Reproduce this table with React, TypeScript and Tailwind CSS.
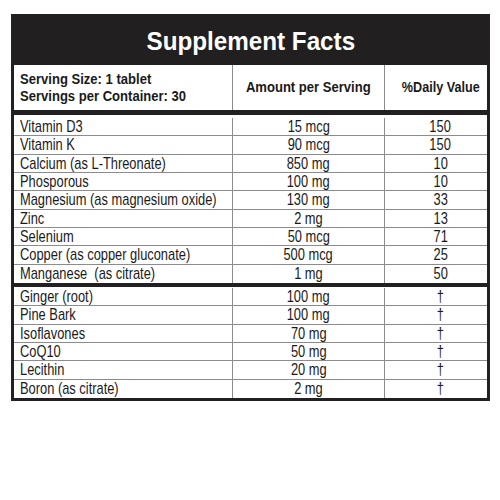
const vitamins = [
  ['Vitamin D3', '15 mcg', '150'],
  ['Vitamin K', '90 mcg', '150'],
  ['Calcium (as L-Threonate)', '850 mg', '10'],
  ['Phosporous', '100 mg', '10'],
  ['Magnesium (as magnesium oxide)', '130 mg', '33'],
  ['Zinc', '2 mg', '13'],
  ['Selenium', '50 mcg', '71'],
  ['Copper (as copper gluconate)', '500 mcg', '25'],
  ['Manganese\u00a0 (as citrate)', '1 mg', '50'],
];

const extras = [
  ['Ginger (root)', '100 mg', '†'],
  ['Pine Bark', '100 mg', '†'],
  ['Isoflavones', '70 mg', '†'],
  ['CoQ10', '50 mg', '†'],
  ['Lecithin', '20 mg', '†'],
  ['Boron (as citrate)', '2 mg', '†'],
];

function Row({ cells, last }: { cells: string[]; last: boolean }) {
  return (
    <div className={`flex h-[18.33px] text-[15.7px] leading-[17px] whitespace-nowrap ${last ? '' : 'border-b border-[#8c8c8c]'}`}>
      <div className="w-[219px] shrink-0 border-r border-[#8c8c8c] pl-[6px]">
        <span className="inline-block origin-left scale-x-[0.82]">{cells[0]}</span>
      </div>
      <div className="w-[152px] shrink-0 border-r border-[#8c8c8c] text-center">
        <span className="inline-block scale-x-[0.82]">{cells[1]}</span>
      </div>
      <div className="flex-1 pl-[9px] text-center">
        <span className="inline-block scale-x-[0.82]">{cells[2]}</span>
      </div>
    </div>
  );
}

export default function App() {
  return (
    <div className="w-[500px] h-[500px] bg-white pt-[14px] pl-[11px] text-[#1a1a1a] font-['Liberation_Sans',Arial,sans-serif]">
      <div className="w-[479px] border-[3px] border-t-0 border-[#222021] bg-white">
        <div className="h-[51px] bg-[#221f20] flex items-center justify-center pt-[3px]">
          <h1 className="inline-block scale-x-[0.95] text-white font-bold text-[25.5px] whitespace-nowrap">
            Supplement Facts
          </h1>
        </div>

        <div className="flex h-[45px] font-bold text-[14.5px] whitespace-nowrap">
          <div className="w-[219px] shrink-0 border-r border-[#8c8c8c] pl-[6px] flex flex-col justify-center leading-[17px] pt-[1px]">
            <span className="inline-block origin-left scale-x-[0.9]">Serving Size: 1 tablet</span>
            <span className="inline-block origin-left scale-x-[0.9]">Servings per Container:&nbsp;30</span>
          </div>
          <div className="w-[152px] shrink-0 border-r border-[#8c8c8c] flex items-center justify-center">
            <span className="inline-block scale-x-[0.9]">Amount per Serving</span>
          </div>
          <div className="flex-1 pl-[9px] flex items-center justify-center">
            <span className="inline-block scale-x-[0.87]">%Daily Value</span>
          </div>
        </div>

        <div className="h-[5px] bg-[#222021]" />
        <div className="pt-[3px]">
          {vitamins.map((r, i) => (
            <Row key={r[0]} cells={r} last={i === vitamins.length - 1} />
          ))}
        </div>

        <div className="h-[4px] bg-[#222021]" />
        <div className="pt-[1px]">
          {extras.map((r, i) => (
            <Row key={r[0]} cells={r} last={i === extras.length - 1} />
          ))}
        </div>
      </div>
    </div>
  );
}
